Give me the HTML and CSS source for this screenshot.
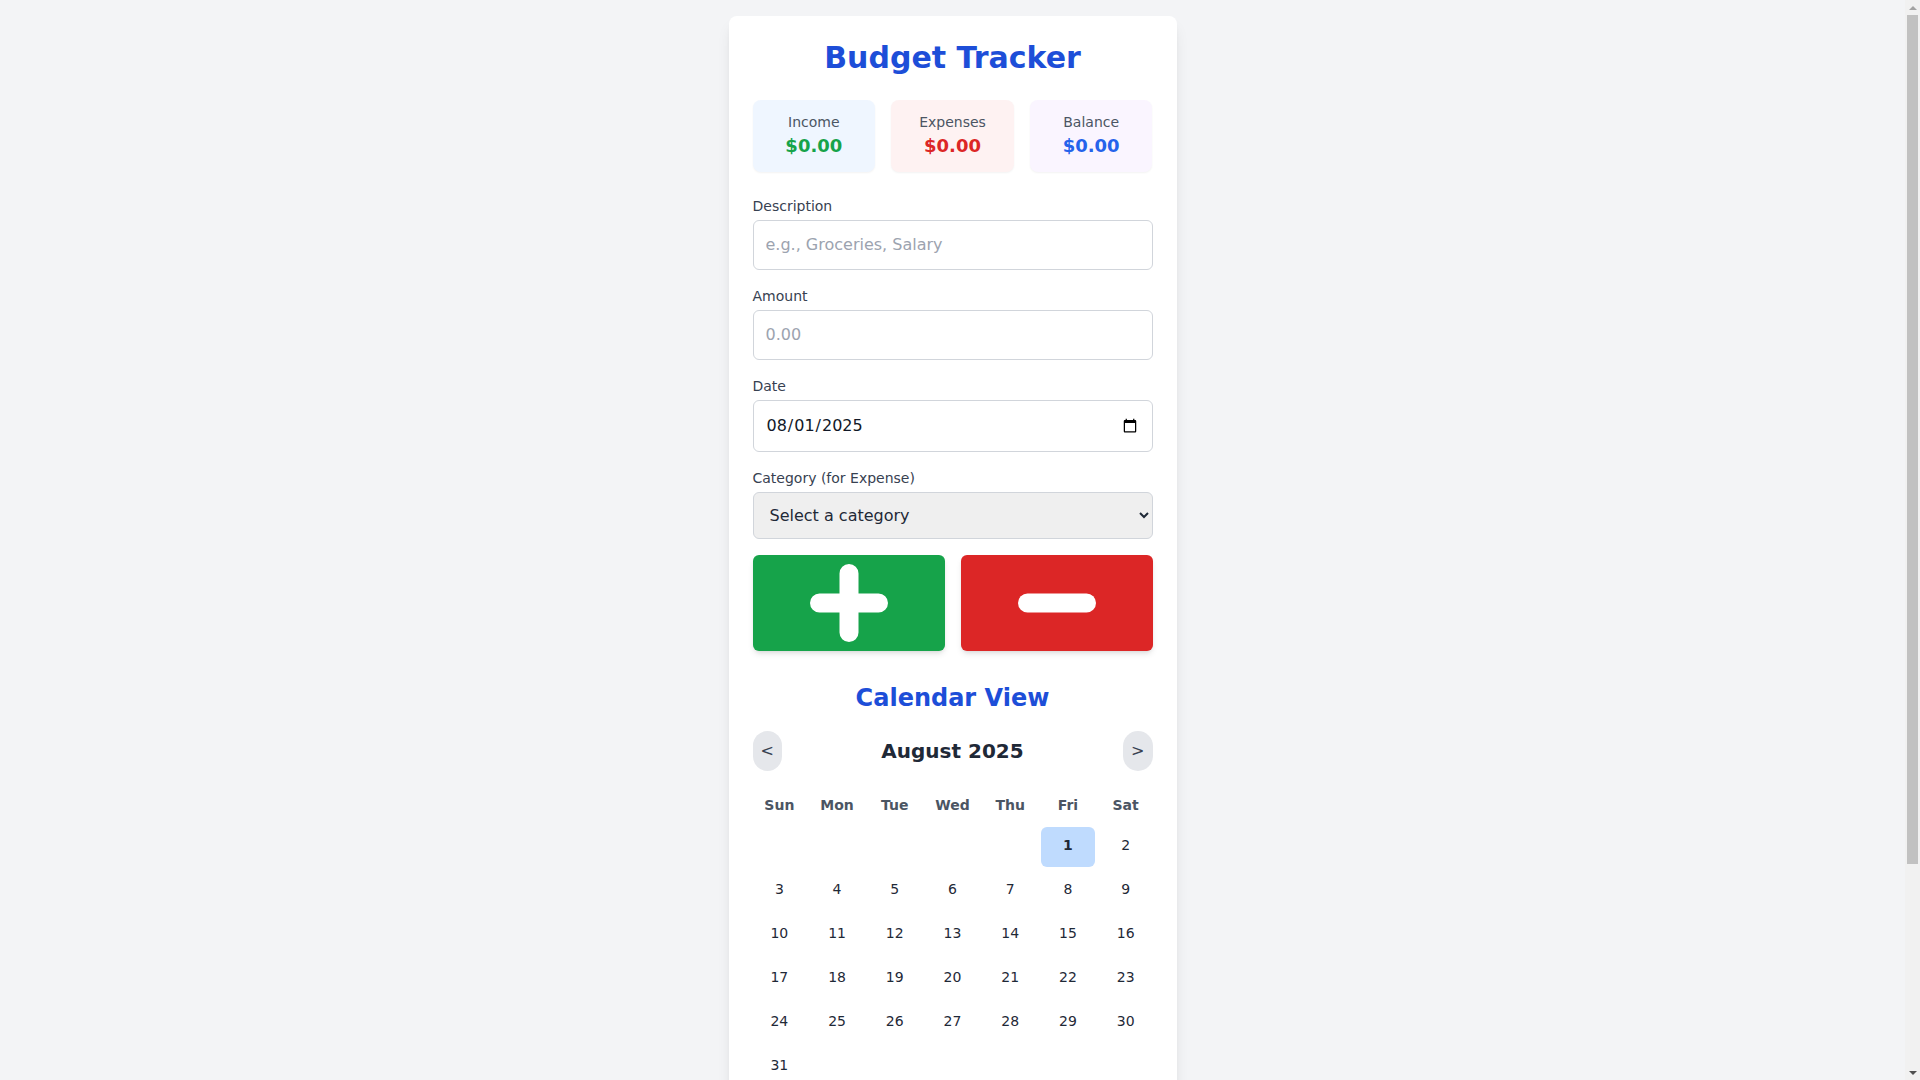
FILE: index.html
```html
<!DOCTYPE html>
<html lang="en">
<head>
<meta charset="utf-8">
<title>Budget Tracker</title>
<link rel="stylesheet" href="styles.css">
</head>
<body>
<div class="page">
  <div class="card">
    <h1 class="title">Budget Tracker</h1>
    <div class="stats">
      <div class="stat stat-income">
        <div class="stat-label">Income</div>
        <div class="stat-value value-green">$0.00</div>
      </div>
      <div class="stat stat-expense">
        <div class="stat-label">Expenses</div>
        <div class="stat-value value-red">$0.00</div>
      </div>
      <div class="stat stat-balance">
        <div class="stat-label">Balance</div>
        <div class="stat-value value-blue">$0.00</div>
      </div>
    </div>

    <form class="form">
      <div class="field">
        <label class="label" for="desc">Description</label>
        <input class="input" id="desc" type="text" placeholder="e.g., Groceries, Salary">
      </div>
      <div class="field">
        <label class="label" for="amount">Amount</label>
        <input class="input" id="amount" type="number" placeholder="0.00">
      </div>
      <div class="field">
        <label class="label" for="date">Date</label>
        <input class="input" id="date" type="date" value="2025-08-01">
      </div>
      <div class="field">
        <label class="label" for="cat">Category (for Expense)</label>
        <select class="input select" id="cat">
          <option>Select a category</option>
          <option>Food</option>
          <option>Transport</option>
          <option>Utilities</option>
        </select>
      </div>
      <div class="actions">
        <button type="button" class="action action-add" aria-label="Add income">
          <svg width="80" height="80" viewBox="0 0 80 80"><path d="M40 10.5V69.5M10.5 40H69.5" stroke="#fff" stroke-width="19" stroke-linecap="round" fill="none"/></svg>
        </button>
        <button type="button" class="action action-sub" aria-label="Add expense">
          <svg width="80" height="80" viewBox="0 0 80 80"><path d="M10.5 40H69.5" stroke="#fff" stroke-width="19" stroke-linecap="round" fill="none"/></svg>
        </button>
      </div>
    </form>

    <section class="calendar">
      <h2 class="cal-title">Calendar View</h2>
      <div class="cal-nav">
        <button type="button" class="nav-btn">&lt;</button>
        <div class="cal-month">August 2025</div>
        <button type="button" class="nav-btn">&gt;</button>
      </div>
      <div class="cal-grid">
        <div class="cal-head">Sun</div>
        <div class="cal-head">Mon</div>
        <div class="cal-head">Tue</div>
        <div class="cal-head">Wed</div>
        <div class="cal-head">Thu</div>
        <div class="cal-head">Fri</div>
        <div class="cal-head">Sat</div>
        <div class="cal-empty"></div>
        <div class="cal-empty"></div>
        <div class="cal-empty"></div>
        <div class="cal-empty"></div>
        <div class="cal-empty"></div>
        <div class="cal-day cal-today">1</div>
        <div class="cal-day">2</div>
        <div class="cal-day">3</div>
        <div class="cal-day">4</div>
        <div class="cal-day">5</div>
        <div class="cal-day">6</div>
        <div class="cal-day">7</div>
        <div class="cal-day">8</div>
        <div class="cal-day">9</div>
        <div class="cal-day">10</div>
        <div class="cal-day">11</div>
        <div class="cal-day">12</div>
        <div class="cal-day">13</div>
        <div class="cal-day">14</div>
        <div class="cal-day">15</div>
        <div class="cal-day">16</div>
        <div class="cal-day">17</div>
        <div class="cal-day">18</div>
        <div class="cal-day">19</div>
        <div class="cal-day">20</div>
        <div class="cal-day">21</div>
        <div class="cal-day">22</div>
        <div class="cal-day">23</div>
        <div class="cal-day">24</div>
        <div class="cal-day">25</div>
        <div class="cal-day">26</div>
        <div class="cal-day">27</div>
        <div class="cal-day">28</div>
        <div class="cal-day">29</div>
        <div class="cal-day">30</div>
        <div class="cal-day">31</div>
      </div>
    </section>
  </div>
</div>

<div class="scrollbar" aria-hidden="true">
  <div class="sb-btn"><span class="sb-arrow-up"></span></div>
  <div class="sb-track"><div class="sb-thumb"></div></div>
  <div class="sb-btn"><span class="sb-arrow-down"></span></div>
</div>
</body>
</html>
```

FILE: styles.css
```css
* {
  box-sizing: border-box;
}

html, body {
  margin: 0;
  padding: 0;
}

body {
  background: #f3f4f6;
  font-family: "DejaVu Sans", sans-serif;
  color: #1f2937;
}

.page {
  padding: 16px 31px 16px 16px;
}

.card {
  width: 448px;
  margin: 0 auto;
  background: #ffffff;
  border-radius: 8px;
  padding: 24px;
  box-shadow: 0 10px 15px -3px rgba(0, 0, 0, 0.1), 0 4px 6px -4px rgba(0, 0, 0, 0.1);
}

.title {
  margin: 0 0 24px;
  font-size: 30px;
  line-height: 36px;
  font-weight: 700;
  text-align: center;
  color: #1d4ed8;
}

.stats {
  display: grid;
  grid-template-columns: repeat(3, 1fr);
  gap: 16px;
  margin-bottom: 24px;
}

.stat {
  padding: 12px;
  border-radius: 8px;
  text-align: center;
  box-shadow: 0 1px 2px 0 rgba(0, 0, 0, 0.05);
}

.stat-income { background: #eff6ff; }
.stat-expense { background: #fef2f2; }
.stat-balance { background: #faf5ff; }

.stat-label {
  font-size: 14px;
  line-height: 20px;
  color: #4b5563;
}

.stat-value {
  font-size: 18px;
  line-height: 28px;
  font-weight: 700;
}

.value-green { color: #16a34a; }
.value-red { color: #dc2626; }
.value-blue { color: #2563eb; }

.form {
  display: flex;
  flex-direction: column;
  gap: 16px;
  margin: 0;
}

.field {
  display: flex;
  flex-direction: column;
}

.label {
  font-size: 14px;
  line-height: 20px;
  font-weight: 500;
  color: #374151;
  margin-bottom: 4px;
}

.input {
  width: 100%;
  padding: 12px;
  border: 1px solid #d1d5db;
  border-radius: 6px;
  font-family: "DejaVu Sans", sans-serif;
  font-size: 16px;
  line-height: 24px;
  color: #111827;
  background: #ffffff;
  margin: 0;
}

.input::placeholder {
  color: #9ca3af;
}

.select {
  background-color: #efefef;
  color: #1f2937;
}

.actions {
  display: grid;
  grid-template-columns: 1fr 1fr;
  gap: 16px;
}

.action {
  height: 96px;
  border: none;
  border-radius: 6px;
  display: flex;
  align-items: center;
  justify-content: center;
  padding: 8px;
  cursor: pointer;
  box-shadow: 0 4px 6px -1px rgba(0, 0, 0, 0.1), 0 2px 4px -2px rgba(0, 0, 0, 0.1);
}

.action svg {
  display: block;
}

.action-add { background: #16a34a; }
.action-sub { background: #dc2626; }

.calendar {
  margin-top: 31px;
}

.cal-title {
  margin: 0 0 17px;
  font-size: 24px;
  line-height: 32px;
  font-weight: 700;
  text-align: center;
  color: #1d4ed8;
}

.cal-nav {
  display: flex;
  align-items: center;
  justify-content: space-between;
  margin-bottom: 16px;
}

.nav-btn {
  padding: 8px;
  border: none;
  border-radius: 9999px;
  background: #e5e7eb;
  font-family: "DejaVu Sans", sans-serif;
  font-size: 16px;
  line-height: 24px;
  color: #374151;
  cursor: pointer;
}

.cal-month {
  font-size: 20px;
  line-height: 28px;
  font-weight: 700;
  color: #1f2937;
}

.cal-grid {
  display: grid;
  grid-template-columns: repeat(7, 1fr);
  gap: 4px;
}

.cal-head {
  padding: 8px 0;
  font-size: 14px;
  line-height: 20px;
  font-weight: 700;
  color: #4b5563;
  text-align: center;
}

.cal-day {
  height: 40px;
  padding: 8px;
  text-align: center;
  font-size: 14px;
  line-height: 20px;
  color: #1f2937;
  border-radius: 6px;
}

.cal-today {
  background: #bfdbfe;
  font-weight: 700;
}

.cal-empty {
  height: 40px;
}

/* Browser scrollbar as seen in the reference */
.scrollbar {
  position: fixed;
  top: 0;
  right: 0;
  bottom: 0;
  width: 15px;
  background: #f1f1f1;
  display: flex;
  flex-direction: column;
}

.sb-btn {
  height: 15px;
  display: flex;
  align-items: center;
  justify-content: center;
  flex: none;
}

.sb-arrow-up {
  width: 0;
  height: 0;
  border-left: 4px solid transparent;
  border-right: 4px solid transparent;
  border-bottom: 4px solid #a3a3a3;
}

.sb-arrow-down {
  width: 0;
  height: 0;
  border-left: 4px solid transparent;
  border-right: 4px solid transparent;
  border-top: 4px solid #505050;
}

.sb-track {
  flex: 1;
  padding: 0 2px;
}

.sb-thumb {
  height: 849px;
  background: #c1c1c1;
}
```
